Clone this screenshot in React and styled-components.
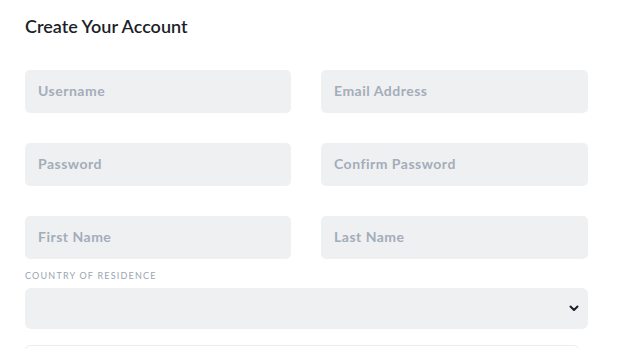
import styled, { createGlobalStyle } from "styled-components";

const GlobalStyle = createGlobalStyle`
  body {
    margin: 0;
    background: #ffffff;
    font-family: Lato, "Open Sans", sans-serif;
  }
`;

const Page = styled.div`
  padding: 14px 30px 0 25px;
  width: 563px;
  height: 349px;
  overflow: hidden;
`;

const Title = styled.h1`
  margin: 0 0 32px;
  font-size: 18px;
  font-weight: 600;
  line-height: 24px;
  color: #1b1f2a;
`;

const Grid = styled.div`
  display: grid;
  grid-template-columns: 266px 267px;
  column-gap: 30px;
  row-gap: 30px;
`;

const Field = styled.input`
  box-sizing: border-box;
  width: 100%;
  height: 43px;
  padding: 0 13px 2px;
  border: none;
  border-radius: 5px;
  background: #eff0f2;
  font-family: Lato, sans-serif;
  font-size: 14px;
  font-weight: 700;
  letter-spacing: 0.5px;
  outline: none;
  &::placeholder {
    color: #a3adb9;
  }
`;

const Label = styled.label`
  display: block;
  margin: 11px 0 7px;
  font-size: 9px;
  font-weight: 400;
  letter-spacing: 1.2px;
  line-height: 11px;
  color: #9aa5b2;
  text-transform: uppercase;
`;

const SelectBox = styled.div`
  box-sizing: border-box;
  display: flex;
  align-items: center;
  justify-content: flex-end;
  width: 563px;
  height: 41px;
  padding: 0 9px;
  border-radius: 6px;
  background: #eff0f2;
  color: #1b1f2a;
`;

const NextBox = styled.div`
  box-sizing: border-box;
  margin-top: 16px;
  width: 554px;
  height: 40px;
  border: 1px solid #eaedf0;
  border-radius: 5px;
`;

function Chevron() {
  return (
    <svg width="10" height="7" viewBox="0 0 10 7">
      <path
        d="M1.5 1.5 L5 5 L8.5 1.5"
        fill="none"
        stroke="#1b1f2a"
        strokeWidth="2"
        strokeLinecap="round"
        strokeLinejoin="round"
      />
    </svg>
  );
}

const fields = [
  "Username",
  "Email Address",
  "Password",
  "Confirm Password",
  "First Name",
  "Last Name",
];

export default function App() {
  return (
    <>
      <GlobalStyle />
      <Page>
        <Title>Create Your Account</Title>
        <Grid>
          {fields.map((f) => (
            <Field key={f} placeholder={f} />
          ))}
        </Grid>
        <Label>Country of Residence</Label>
        <SelectBox>
          <Chevron />
        </SelectBox>
        <NextBox />
      </Page>
    </>
  );
}
